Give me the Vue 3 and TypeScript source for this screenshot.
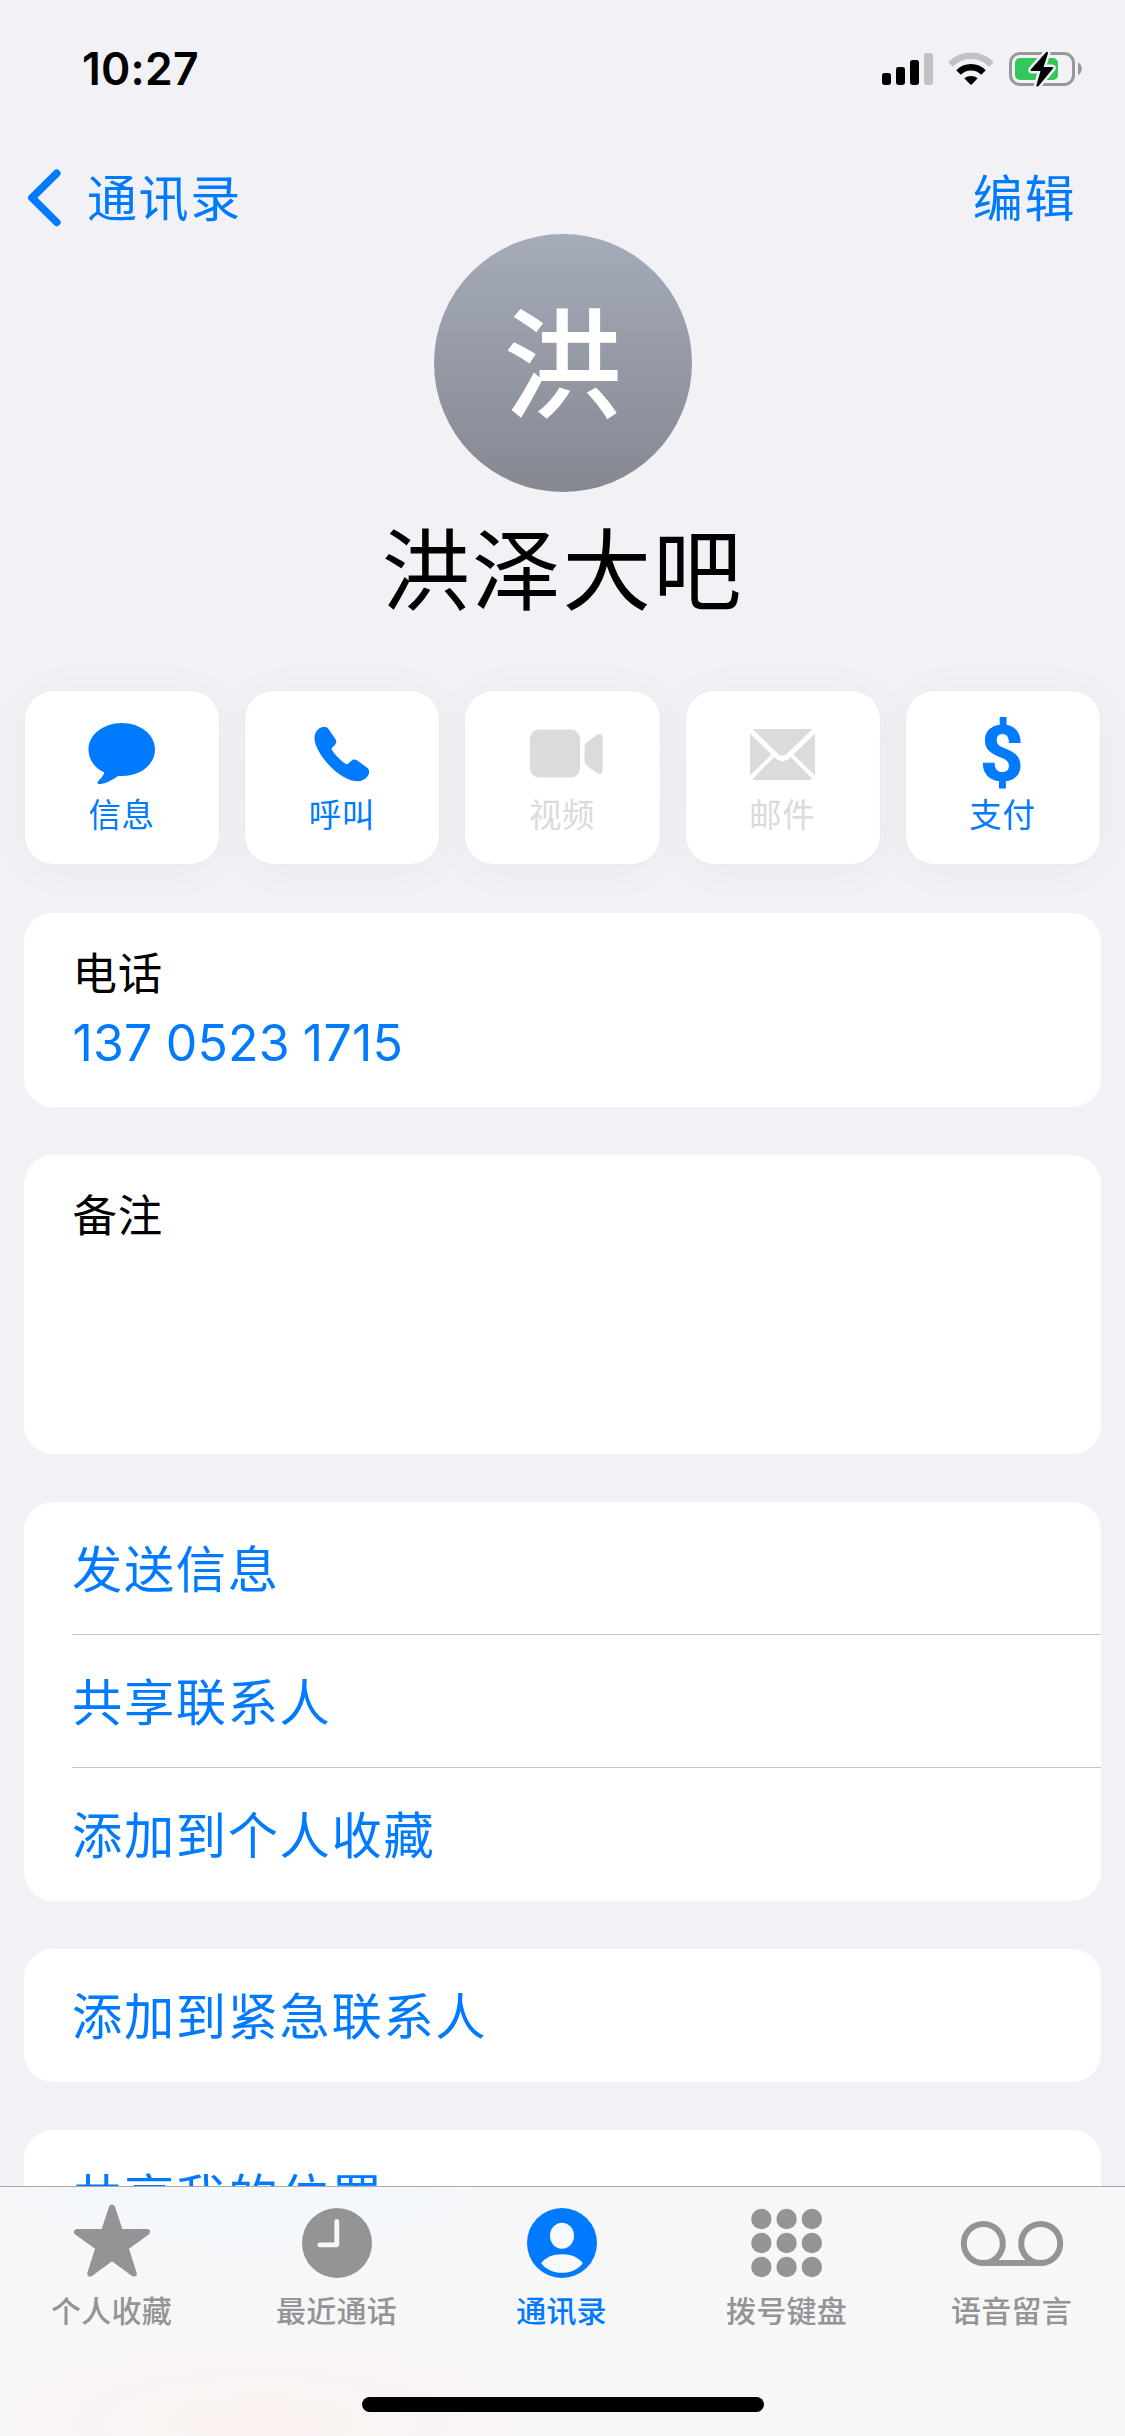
<script setup lang="ts">
interface Action { id: string; label: string; disabled?: boolean }
interface Tab { id: string; label: string; active?: boolean }

const actions: Action[] = [
  { id: 'message', label: '信息' },
  { id: 'call', label: '呼叫' },
  { id: 'video', label: '视频', disabled: true },
  { id: 'mail', label: '邮件', disabled: true },
  { id: 'pay', label: '支付' },
]
const links: string[][] = [
  ['发送信息', '共享联系人', '添加到个人收藏'],
  ['添加到紧急联系人'],
  ['共享我的位置'],
]
const tabs: Tab[] = [
  { id: 'favorites', label: '个人收藏' },
  { id: 'recents', label: '最近通话' },
  { id: 'contacts', label: '通讯录', active: true },
  { id: 'keypad', label: '拨号键盘' },
  { id: 'voicemail', label: '语音留言' },
]
const dots = [0, 1, 2, 3, 4, 5, 6, 7, 8].map((i) => ({
  x: 20.4 + (i % 3) * 25.2,
  y: 16 + Math.floor(i / 3) * 24,
}))
</script>

<template>
  <div class="screen">
    <header class="status">
      <span class="time">10:27</span>
      <svg class="indicators" width="204" height="40" viewBox="880 49 204 40">
        <rect x="882" y="73" width="9" height="12" rx="2.4" />
        <rect x="896" y="67" width="9" height="18" rx="2.4" />
        <rect x="910" y="60" width="9" height="25" rx="2.4" />
        <rect x="924" y="53" width="9" height="32" rx="2.4" fill="#c2c1c6" />
        <path d="M950.500 64.500A28.500 28.500 0 0 1 991.500 64.500" fill="none" stroke="#c2c1c6" stroke-width="6.400" />
        <path d="M958.500 72.500A17.500 17.500 0 0 1 983.500 72.500" fill="none" stroke="#000" stroke-width="6.400" />
        <path d="M964.300 78.300A10.500 10.500 0 0 1 977.700 78.300L972 84.300Q971 85.200 970 84.300Z" />
        <rect x="1010.500" y="53.500" width="63" height="31" rx="9.500" fill="none" stroke="#98979c" stroke-width="3" />
        <rect x="1015" y="58" width="43" height="22" rx="5" fill="#34c759" />
        <path d="M1078 62.600C1083 64.800 1083 73 1078 75.200Z" fill="#98979c" />
        <path
          d="M1046.300 52L1031 69.200Q1030 71 1032 71H1040.500L1036.300 85.500Q1036.600 87.400 1038.600 86L1053 68.600Q1054 67 1052 67H1043.600L1048 53.200Q1048 51 1046.300 52Z"
          stroke="#f1f0f6" stroke-width="5" stroke-linejoin="round" paint-order="stroke"
        />
      </svg>
    </header>

    <nav class="nav">
      <a class="back">
        <svg width="34" height="58" viewBox="0 0 34 58">
          <path d="M28.800 4.300L4 28.800L28.800 53.400" fill="none" stroke="currentColor" stroke-width="7.600" stroke-linecap="round" stroke-linejoin="round" />
        </svg>
        <span>通讯录</span>
      </a>
      <a><span>编辑</span></a>
    </nav>

    <section class="profile">
      <div class="avatar"><span>洪</span></div>
      <h1>洪泽大吧</h1>
    </section>

    <section class="actions">
      <div v-for="a in actions" :key="a.id" class="action" :class="{ disabled: a.disabled }">
        <div class="glyph">
          <svg v-if="a.id === 'message'" width="68" height="62" viewBox="0 0 68 62">
            <path fill="currentColor" d="M34 0C52.500 0 67 11.500 67 26.500C67 41.500 52.500 53 34 53L30 52.900C26 56 18 60.500 11.500 61.200C9.500 61.200 9 60 10 58.500C12 56 15.500 53 16.300 49.500C6.500 45 .5 36.500 .5 26.500C.5 11.500 15.500 0 34 0Z" />
          </svg>
          <svg v-else-if="a.id === 'call'" width="56" height="56" viewBox="0 0 56 56">
            <path fill="currentColor" d="M5.500 2.200C9 0 12.500 .2 14.500 3L21.500 13.200C22.800 15.400 22.500 17 20.900 18.900L18.300 21.600C17.500 22.400 17.500 23.200 18.100 24.300C21 29 26.800 34.700 31.500 37.700C32.500 38.300 33.500 38.300 34.300 37.500L37.300 34.800C39.500 33 41 33.200 43 34.300L52.500 41.200C55.800 43.700 56 46.600 53.600 50.300C49.300 56.500 41.500 56 35 53.500C21.500 48 7.500 33.500 2 19.500C-.4 13 -.3 6 5.500 2.200Z" />
          </svg>
          <svg v-else-if="a.id === 'video'" class="camera" width="73" height="50" viewBox="0 0 73 50">
            <rect x="0" y="0.500" width="50" height="48" rx="9" fill="currentColor" />
            <path fill="currentColor" d="M54.500 17.500Q54.500 15.500 56.200 14L67 5.800Q72.500 3.500 72.500 8.500V41.500Q72.500 46.500 67 44.200L56.200 36Q54.500 34.500 54.500 32.500Z" />
          </svg>
          <svg v-else-if="a.id === 'mail'" width="65" height="51" viewBox="0 0 65 51">
            <path fill="currentColor" d="M4.500 0H60.500Q62 0 61.500 1L37.500 24.200Q32.500 29.500 27.500 24.200L3.500 1Q3 0 4.500 0ZM0 4.500L21.500 25.500L0 46.500ZM65 4.500V46.500L43.500 25.500ZM24.200 28L25 28.800Q32.500 36 40 28.800L40.800 28L62 49.500Q61.500 51 60 51H5Q3.500 51 3 49.500Z" />
          </svg>
          <span v-else class="dollar">$</span>
        </div>
        <span class="caption">{{ a.label }}</span>
      </div>
    </section>

    <main class="cards">
      <section class="card phone">
        <p class="label">电话</p>
        <p class="number">137 0523 1715</p>
      </section>
      <section class="card notes"><p class="label">备注</p></section>
      <section v-for="(group, i) in links" :key="i" class="card list">
        <a v-for="item in group" :key="item" class="row">{{ item }}</a>
      </section>
    </main>

    <footer class="tabbar">
      <div class="tabs">
        <a v-for="t in tabs" :key="t.id" class="tab" :class="{ active: t.active }">
          <svg v-if="t.id === 'favorites'" width="92" height="80" viewBox="0 0 92 80">
            <path fill="currentColor" stroke="currentColor" stroke-width="6" stroke-linejoin="round" d="M46 4.500L54.200 29H81L59.500 44.600L67.800 70.600L46 54.500L24.200 70.600L32.500 44.600L11 29H37.800Z" />
          </svg>
          <svg v-else-if="t.id === 'recents'" width="92" height="80" viewBox="0 0 92 80">
            <circle cx="46" cy="40" r="35" fill="currentColor" />
            <path d="M45.800 18.500V41.800H28.800" fill="none" stroke="#f7f8fa" stroke-width="4.800" stroke-linecap="round" stroke-linejoin="round" />
          </svg>
          <svg v-else-if="t.id === 'contacts'" width="92" height="80" viewBox="0 0 92 80">
            <circle cx="46" cy="40" r="35" fill="currentColor" />
            <ellipse cx="46" cy="32.800" rx="12" ry="13" fill="#f8f9fb" />
            <path d="M25.200 60.500C29 54.500 37 51.300 46 51.300S63 54.500 66.800 60.500C62 66.500 54.500 69.800 46 69.800S30 66.500 25.200 60.500Z" fill="#f8f9fb" />
          </svg>
          <svg v-else-if="t.id === 'keypad'" width="92" height="80" viewBox="0 0 92 80">
            <circle v-for="(d, i) in dots" :key="i" :cx="d.x" :cy="d.y" r="10.200" fill="currentColor" />
          </svg>
          <svg v-else width="104" height="80" viewBox="0 0 104 80">
            <g fill="none" stroke="currentColor" stroke-width="6">
              <circle cx="23.300" cy="40.500" r="19.500" />
              <circle cx="80.700" cy="40.500" r="19.500" />
              <path d="M23.300 60H80.700" />
            </g>
          </svg>
          <span>{{ t.label }}</span>
        </a>
      </div>
      <div class="home"></div>
    </footer>
  </div>
</template>

<style>
body { margin: 0; background: #f2f1f6; }
</style>

<style scoped>
.screen {
  position: relative;
  width: 1125px;
  height: 2436px;
  overflow: hidden;
  display: flex;
  flex-direction: column;
  background: #f2f1f6;
  color: #000;
  font-family: Inter, "Noto Sans CJK SC", sans-serif;
}
h1, p { margin: 0; font-weight: 400; }
svg { display: block; flex: none; }
a { color: #007aff; }

.status {
  height: 132px;
  flex: none;
  box-sizing: border-box;
  padding: 0 41px 0 82px;
  display: flex;
  justify-content: space-between;
  align-items: flex-start;
}
.time { margin-top: 39px; font-size: 44.5px; line-height: 60px; font-weight: 600; letter-spacing: 0.2px; }
.indicators { margin-top: 49px; }

.nav {
  height: 102px;
  flex: none;
  box-sizing: border-box;
  padding: 30px 49px 0 28px;
  display: flex;
  justify-content: space-between;
  align-items: center;
  font-size: 50px;
  line-height: 72px;
  letter-spacing: 1.6px;
}
.nav span { display: block; padding-top: 1px; }
.back { display: flex; align-items: center; gap: 25px; }

.profile { flex: none; display: flex; flex-direction: column; align-items: center; }
.avatar {
  width: 258px;
  height: 258px;
  border-radius: 50%;
  display: flex;
  align-items: center;
  justify-content: center;
  background: linear-gradient(#a5abb9, #858891);
  color: #fff;
  font-size: 119px;
  line-height: 160px;
  font-weight: 500;
}
.avatar span { padding-top: 6px; }
h1 { margin-top: 19px; font-size: 88.5px; line-height: 120px; letter-spacing: 2px; }

.actions { flex: none; display: flex; gap: 26px; margin: 60px 25px 0; }
.action {
  flex: 1;
  height: 173px;
  border-radius: 28px;
  background: #fff;
  box-shadow: 0 0 2px rgba(0, 0, 0, 0.05), 0 4px 50px rgba(0, 0, 0, 0.035);
  color: #007aff;
  display: flex;
  flex-direction: column;
  align-items: center;
}
.action.disabled { color: #dbdbdc; }
.glyph { height: 72px; margin-top: 27px; display: flex; align-items: center; justify-content: center; }
.camera { margin-left: 7px; }
.dollar { margin-right: 2px; font: 700 76px/72px Roboto, sans-serif; -webkit-text-stroke: 1px currentColor; }
.caption { margin: 2px 1px 0 0; font-size: 32.5px; line-height: 48px; letter-spacing: 0.6px; }

.cards { display: flex; flex-direction: column; gap: 48px; margin: 49px 24px 0; }
.card { flex: none; background: #fff; border-radius: 29px; overflow: hidden; }
.phone { height: 194px; }
.notes { height: 299px; }
.label { margin: 31px 0 0 48.5px; font-size: 44.5px; line-height: 60px; letter-spacing: 0.8px; }
.number { margin: 9px 0 0 48.5px; color: #007aff; font-size: 50px; line-height: 60px; letter-spacing: 0.2px; word-spacing: -1.2px; }
.list { padding-bottom: 1px; }
.row {
  display: block;
  margin-left: 48px;
  height: 132px;
  line-height: 136px;
  font-size: 50.3px;
  letter-spacing: 1.6px;
}
.row + .row { border-top: 1px solid #c5c5c7; }

.tabbar {
  position: absolute;
  left: 0;
  right: 0;
  bottom: 0;
  height: 249px;
  border-top: 1px solid #aaaaad;
  background:
    radial-gradient(ellipse 420px 120px at 260px 235px, rgba(255, 238, 235, 0.5), transparent),
    radial-gradient(ellipse 340px 90px at 240px 0, rgba(240, 248, 255, 0.7), transparent),
    #f7f7f8;
}
.tabs { display: flex; margin: 0 1px 0 -1px; }
.tab { flex: 1; display: flex; flex-direction: column; align-items: center; padding-top: 16px; color: #949496; }
.tab.active { color: #007aff; }
.tab span { margin-top: 6px; font-size: 30px; line-height: 44px; font-weight: 500; letter-spacing: 0.2px; }
.home { width: 402px; height: 15px; margin: 64px auto 0; border-radius: 8px; background: #000; }
</style>
